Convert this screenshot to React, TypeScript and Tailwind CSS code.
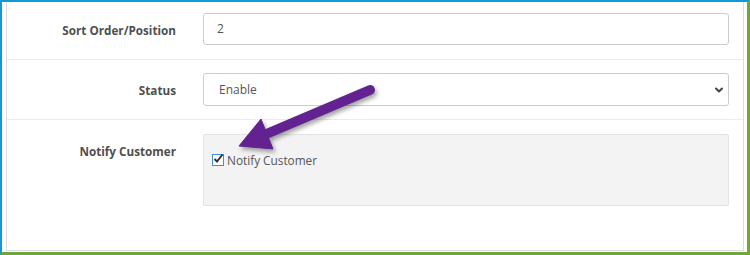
import { ChevronDown } from 'lucide-react';

const font = { fontFamily: '"Open Sans", "Liberation Sans", sans-serif' };

function Row({ label, children, className }: { label: string; children: React.ReactNode; className: string }) {
  return (
    <div className={`flex border-b border-[#ebebeb] ${className}`}>
      <div className="w-[184px] shrink-0 pr-[15px] pt-[8px] text-right text-[11.7px] font-bold leading-[18px] text-[#4f4f4f]">
        {label}
      </div>
      <div className="flex-1 pl-[12px] pr-[14px]">{children}</div>
    </div>
  );
}

function Arrow() {
  return (
    <svg className="pointer-events-none absolute left-0 top-0" width="750" height="255">
      <defs>
        <filter id="shadow" x="-20%" y="-20%" width="140%" height="150%">
          <feDropShadow dx="2" dy="3" stdDeviation="2" floodColor="#000" floodOpacity="0.35" />
        </filter>
      </defs>
      <g filter="url(#shadow)" fill="#62248f" stroke="#62248f">
        <line x1="368" y1="88" x2="262" y2="133" strokeWidth="10" strokeLinecap="round" />
        <polygon points="237,144 259,117 271,147" strokeWidth="1" strokeLinejoin="round" />
      </g>
    </svg>
  );
}

export default function App() {
  return (
    <div
      className="relative h-[255px] w-[750px] overflow-hidden border-t-2 border-l-2 border-b-[3px] border-r-[3px] border-t-[#0d9ad9] border-l-[#0d9ad9] border-b-[#6fa83a] border-r-[#6fa83a] bg-white pb-[1px] pl-[4px] pr-[3px]"
      style={font}
    >
      <div className="h-full border-x border-b border-[#dddddd]">
        <Row label="Sort Order/Position" className="h-[58px] pt-[11px]">
          <div className="flex h-[32px] items-center rounded-[3px] border border-[#cccccc] px-[13px] text-[12px] text-[#555]">
            2
          </div>
        </Row>
        <Row label="Status" className="h-[60px] pt-[13px]">
          <div className="flex h-[33px] items-center justify-between rounded-[3px] border border-[#cccccc] pl-[15px] pr-[3px] text-[12px] text-[#555]">
            <span>Enable</span>
            <ChevronDown className="h-[12px] w-[12px] text-[#444]" strokeWidth={4} />
          </div>
        </Row>
        <div className="flex">
          <div className="w-[184px] shrink-0 pr-[15px] pt-[22px] text-right text-[11.7px] font-bold leading-[18px] text-[#4f4f4f]">
            Notify Customer
          </div>
          <div className="flex-1 pl-[12px] pr-[14px] pt-[14px]">
            <div className="h-[72px] rounded-[2px] border border-[#e3e3e3] bg-[#f3f3f3] pl-[8px] pt-[16px]">
              <label className="flex items-center gap-[3px] text-[11.8px] leading-[18px] text-[#555]">
                <span className="relative flex h-[12px] w-[12px] items-center justify-center border border-[#3f8ee0] bg-white">
                  <svg width="11" height="11" viewBox="0 0 11 11" className="absolute -top-[2px] left-0">
                    <path d="M1.5 6 L4 8.5 L9.5 1.5" fill="none" stroke="#333" strokeWidth="2" />
                  </svg>
                </span>
                Notify Customer
              </label>
            </div>
          </div>
        </div>
      </div>
      <Arrow />
    </div>
  );
}
